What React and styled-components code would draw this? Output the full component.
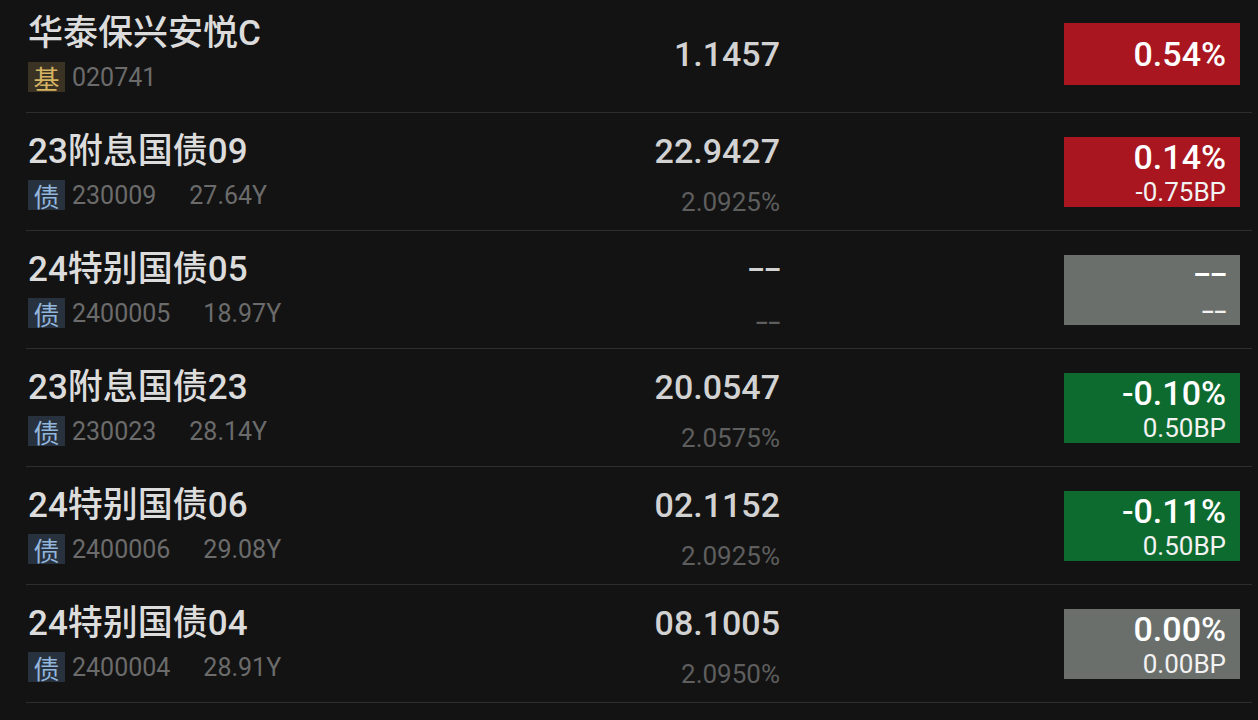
import React from 'react';
import styled, { createGlobalStyle, css } from 'styled-components';

const GlobalStyle = createGlobalStyle`
  html, body {
    margin: 0;
    padding: 0;
    background: #131313;
    overflow: hidden;
  }
  body {
    font-family: Roboto, "Noto Sans CJK SC", sans-serif;
  }
`;

const EMPTY = null;

const rows = [
  { name: '华泰保兴安悦C', tag: '基', code: '020741', price: '1.1457', change: '0.54%', tone: 'up' },
  { name: '23附息国债09', tag: '债', code: '230009', years: '27.64Y', price: '22.9427', yld: '2.0925%', change: '0.14%', bp: '-0.75BP', tone: 'up' },
  { name: '24特别国债05', tag: '债', code: '2400005', years: '18.97Y', price: EMPTY, yld: EMPTY, change: EMPTY, bp: EMPTY, tone: 'flat', empty: true },
  { name: '23附息国债23', tag: '债', code: '230023', years: '28.14Y', price: '20.0547', yld: '2.0575%', change: '-0.10%', bp: '0.50BP', tone: 'down' },
  { name: '24特别国债06', tag: '债', code: '2400006', years: '29.08Y', price: '02.1152', yld: '2.0925%', change: '-0.11%', bp: '0.50BP', tone: 'down' },
  { name: '24特别国债04', tag: '债', code: '2400004', years: '28.91Y', price: '08.1005', yld: '2.0950%', change: '0.00%', bp: '0.00BP', tone: 'flat' },
];

const toneColors = {
  up: '#a9161f',
  down: '#0e6b30',
  flat: '#6a6f6c',
};

const tagStyles = {
  '基': css`
    background: #3a3222;
    color: #d6b362;
  `,
  '债': css`
    background: #28323e;
    color: #93b6dd;
  `,
};

// placeholder "--" for missing quotes
const Dash = styled.span`
  font-size: 0.8em;
  font-weight: 700;
  letter-spacing: -0.03em;
`;

const List = styled.div`
  margin-top: -5px;
  padding: 0 6px 0 26px;
`;

const Row = styled.div`
  display: flex;
  height: 117px;
  border-bottom: 1px solid #2e2e2e;
`;

const Info = styled.div`
  width: 554px;
  padding: 20px 0 0 2px;
  box-sizing: border-box;
`;

const Title = styled.div`
  font-size: 35px;
  line-height: 38px;
  font-weight: 500;
  color: #dcdcdc;
  white-space: nowrap;
`;

const Meta = styled.div`
  display: flex;
  align-items: center;
  height: 30px;
  margin-top: 9px;
  font-size: 25px;
  color: #6b6b6b;
`;

const Tag = styled.span`
  display: inline-flex;
  align-items: center;
  justify-content: center;
  width: 37px;
  height: 30px;
  margin-right: 7px;
  font-size: 26px;
  font-family: "Noto Sans CJK SC", sans-serif;
  ${p => tagStyles[p.$kind]}
`;

const Years = styled.span`
  margin-left: 33px;
`;

const PriceCol = styled.div`
  width: 200px;
  align-self: center;
  text-align: right;
  padding-top: ${p => (p.$withSub ? 5 : 0)}px;
`;

const Price = styled.div`
  font-size: 34px;
  line-height: 38px;
  font-weight: 500;
  color: #d2d2d2;
`;

const Yield = styled.div`
  margin-top: 18px;
  font-size: 26px;
  line-height: 28px;
  color: #5e5e5e;
`;

const Badge = styled.div`
  align-self: center;
  display: flex;
  flex-direction: column;
  justify-content: center;
  align-items: flex-end;
  box-sizing: border-box;
  width: 176px;
  height: ${p => (p.$withSub ? 70 : 62)}px;
  margin: 0 12px 0 auto;
  padding: ${p => (p.$withSub ? '1px 14px 0 0' : '0 14px 0 0')};
  background: ${p => toneColors[p.$tone]};
  color: #ffffff;
`;

const Change = styled.div`
  font-size: 34px;
  line-height: 36px;
  font-weight: 500;
`;

const Bp = styled.div`
  margin-top: 3px;
  font-size: 26px;
  line-height: 28px;
  color: #f2f2f2;
`;

const val = v => (v === EMPTY ? <Dash>––</Dash> : v);

export default function App() {
  return (
    <>
      <GlobalStyle />
      <List>
        {rows.map(r => {
          const withYield = r.empty || !!r.yld;
          const withBp = r.empty || !!r.bp;
          return (
            <Row key={r.code}>
              <Info>
                <Title>{r.name}</Title>
                <Meta>
                  <Tag $kind={r.tag}>{r.tag}</Tag>
                  <span>{r.code}</span>
                  {r.years && <Years>{r.years}</Years>}
                </Meta>
              </Info>
              <PriceCol $withSub={withYield}>
                <Price>{val(r.price)}</Price>
                {withYield && <Yield>{val(r.yld)}</Yield>}
              </PriceCol>
              <Badge $tone={r.tone} $withSub={withBp}>
                <Change>{val(r.change)}</Change>
                {withBp && <Bp>{val(r.bp)}</Bp>}
              </Badge>
            </Row>
          );
        })}
      </List>
    </>
  );
}
